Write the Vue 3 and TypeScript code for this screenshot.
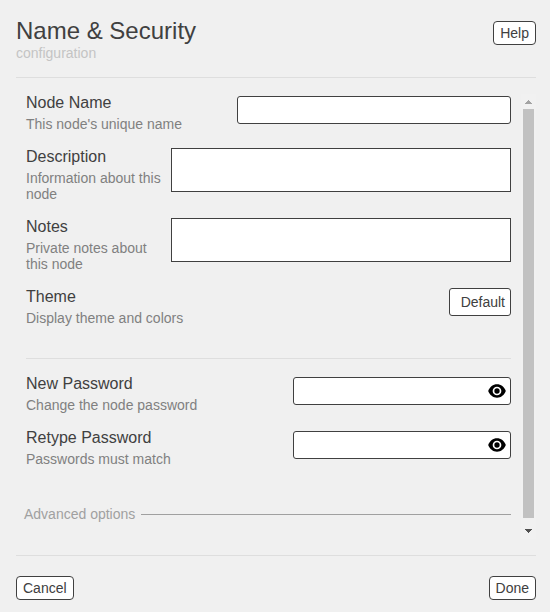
<script setup lang="ts">
import { ref } from 'vue'

interface Field {
  id: string
  title: string
  hint: string
}

const textFields: Field[] = [
  { id: 'description', title: 'Description', hint: 'Information about this node' },
  { id: 'notes', title: 'Notes', hint: 'Private notes about this node' },
]
const passwordFields: Field[] = [
  { id: 'password', title: 'New Password', hint: 'Change the node password' },
  { id: 'confirm', title: 'Retype Password', hint: 'Passwords must match' },
]

const values = ref<Record<string, string>>({ name: '', description: '', notes: '', password: '', confirm: '' })
const shown = ref<Record<string, boolean>>({})
</script>

<template>
  <div class="dialog">
    <header class="header">
      <div>
        <div class="title">Name &amp; Security</div>
        <div class="subtitle">configuration</div>
      </div>
      <button class="button">Help</button>
    </header>

    <div class="body">
      <div class="content">
        <div class="row">
          <div class="label">
            <div class="name">Node Name</div>
            <div class="hint">This node's unique name</div>
          </div>
          <input v-model="values.name" class="input node-name" type="text" />
        </div>
        <div v-for="f in textFields" :key="f.id" class="row">
          <div class="label">
            <div class="name">{{ f.title }}</div>
            <div class="hint">{{ f.hint }}</div>
          </div>
          <textarea v-model="values[f.id]" class="area"></textarea>
        </div>
        <div class="row">
          <div class="label">
            <div class="name">Theme</div>
            <div class="hint">Display theme and colors</div>
          </div>
          <button class="select">Default</button>
        </div>

        <div class="rule"></div>

        <div v-for="f in passwordFields" :key="f.id" class="row">
          <div class="label">
            <div class="name">{{ f.title }}</div>
            <div class="hint">{{ f.hint }}</div>
          </div>
          <div class="input secret">
            <input v-model="values[f.id]" class="bare" :type="shown[f.id] ? 'text' : 'password'" />
            <svg class="eye" viewBox="0 0 18 14" @click="shown[f.id] = !shown[f.id]">
              <path d="M0.2 7C1.8 3 5 0.3 9 0.3S16.2 3 17.8 7C16.2 11 13 13.7 9 13.7S1.8 11 0.2 7Z" fill="#000" />
              <circle cx="9" cy="7" r="3.5" fill="none" stroke="#fff" stroke-width="1.7" />
            </svg>
          </div>
        </div>

        <div class="advanced">
          <span>Advanced options</span>
          <div class="line"></div>
        </div>
      </div>

      <div class="scrollbar">
        <svg class="arrow" viewBox="0 0 15 15" shape-rendering="crispEdges">
          <path d="M4 10V9H5V8H6V7H7V6H8V7H9V8H10V9H11V10Z" fill="#a3a3a3" />
        </svg>
        <div class="thumb"></div>
        <svg class="arrow" viewBox="0 0 15 15" shape-rendering="crispEdges">
          <path d="M4 5V6H5V7H6V8H7V9H8V8H9V7H10V6H11V5Z" fill="#505050" />
        </svg>
      </div>
    </div>

    <footer class="footer">
      <button class="button">Cancel</button>
      <button class="button">Done</button>
    </footer>
  </div>
</template>

<style>
body {
  background: #f0f0f0;
}
</style>

<style scoped>
.dialog {
  box-sizing: border-box;
  width: 550px;
  height: 612px;
  padding: 0 14px 0 16px;
  display: flex;
  flex-direction: column;
  background: #f0f0f0;
  color: #404040;
  font: 14px/16px "Liberation Sans", Arial, sans-serif;
}
.header {
  box-sizing: border-box;
  height: 78px;
  padding-top: 17px;
  border-bottom: 1px solid #dedede;
  display: flex;
  justify-content: space-between;
  align-items: flex-start;
}
.title {
  font-size: 24px;
  line-height: 28px;
}
.subtitle {
  color: #c4c4c4;
}
.button,
.select {
  box-sizing: border-box;
  margin: 0;
  border: 1px solid #404040;
  background: #fff;
  color: #404040;
  font: inherit;
  text-align: center;
}
.button {
  height: 24px;
  padding: 0 6px;
  border-radius: 4px;
}
.header .button {
  margin-top: 4px;
}
.body {
  height: 445px;
  padding: 16px 0;
  display: flex;
  gap: 10px;
}
.content {
  flex: 1;
  padding-left: 10px;
}
.row {
  display: flex;
  justify-content: space-between;
  align-items: flex-start;
  gap: 10px;
  margin-bottom: 16px;
}
.label {
  flex: 1;
}
.name {
  font-size: 16px;
  line-height: 18px;
}
.hint {
  margin-top: 4px;
  color: #808080;
}
.input {
  box-sizing: border-box;
  height: 28px;
  margin: 2px 0 0;
  border: 1px solid #404040;
  border-radius: 3px;
  background: #fff;
  outline: none;
}
.node-name {
  width: 274px;
}
.area {
  box-sizing: border-box;
  width: 340px;
  height: 44px;
  margin: 0;
  border: 1px solid #404040;
  border-radius: 0;
  background: #fff;
  resize: none;
  outline: none;
}
.select {
  width: 62px;
  height: 28px;
  padding: 0 5px 0 10px;
  border-radius: 3px;
  text-align: right;
}
.rule {
  height: 1px;
  margin: 32px 0 16px;
  background: #dedede;
}
.secret {
  width: 218px;
  padding: 0 4px 0 6px;
  display: flex;
  align-items: center;
}
.bare {
  flex: 1;
  min-width: 0;
  padding: 0;
  border: 0;
  outline: none;
}
.eye {
  width: 18px;
  height: 14px;
}
.advanced {
  display: flex;
  align-items: center;
  gap: 6px;
  margin: 39px 0 0 -2px;
  color: #a0a0a0;
}
.line {
  flex: 1;
  height: 1px;
  background: #a0a0a0;
}
.scrollbar {
  width: 15px;
  background: #f1f1f1;
  display: flex;
  flex-direction: column;
  align-items: center;
}
.arrow {
  width: 15px;
  height: 15px;
}
.thumb {
  width: 11px;
  height: 409px;
  margin-bottom: 6px;
  background: #c1c1c1;
}
.footer {
  flex: 1;
  padding-top: 20px;
  border-top: 1px solid #dedede;
  display: flex;
  justify-content: space-between;
  align-items: flex-start;
}
</style>
